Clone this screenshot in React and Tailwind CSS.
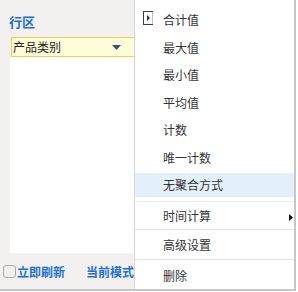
import React from 'react';

const FONT = { fontFamily: '"Noto Sans CJK SC", "Noto Sans", sans-serif' };

const topItems = ['合计值', '最大值', '最小值', '平均值', '计数', '唯一计数', '无聚合方式'];

function CheckedIcon() {
  return (
    <svg width="10" height="14" viewBox="0 0 10 14" className="absolute left-[8px] top-[3px]">
      <rect x="0.5" y="0.5" width="9" height="13" fill="#fff" stroke="#2b3a6b" />
      <line x1="9.5" y1="1" x2="9.5" y2="13" stroke="#b8bccb" />
      <path d="M4 4 L7 7 L4 10 Z" fill="#1f2d5c" />
    </svg>
  );
}

function App() {
  return (
    <div className="w-[298px] h-[292px] bg-white overflow-hidden" style={FONT}>
      <div className="flex h-[291px] w-[296px] border-b-2 border-[#c6c6c6]">
        {/* left panel */}
        <div className="w-[134px] bg-[#f2f1f0] flex flex-col shrink-0 overflow-hidden">
          <div className="pt-[12px] pl-[9px] text-[13px] leading-[19px] font-bold text-[#1f6fd6]">行区</div>
          <div className="mt-[6px] ml-[11px] h-[20px] flex items-center bg-[#fffcd9] border border-r-0 border-[#f2cd55] pl-px">
            <span className="text-[12px] text-[#222] flex-1">产品类别</span>
            <svg width="9" height="5" viewBox="0 0 9 5" className="mr-[13px]">
              <path d="M0 0 H9 L4.5 5 Z" fill="#2f5585" />
            </svg>
          </div>
          <div className="ml-[10px] h-[196px] bg-white" />
          <div className="flex items-center h-[35px] pl-[3px] pt-[2px] whitespace-nowrap">
            <span className="w-[13px] h-[13px] rounded-[3px] border border-[#a9a9a9] bg-[#f0f0f0] shrink-0" />
            <span className="ml-px text-[12px] font-bold text-[#1f6fd6] shrink-0">立即刷新</span>
            <span className="ml-[21px] text-[12px] font-bold text-[#1f6fd6] shrink-0">当前模式:</span>
          </div>
        </div>
        {/* menu */}
        <div className="flex-1 bg-white border-l border-[#d6d6d6] border-r-2 border-r-[#c6c6c6] flex flex-col pt-[8px] text-[12px] text-[#333]">
          {topItems.map((t, i) => (
            <div
              key={t}
              className={`relative h-[24px] mb-[4px] flex items-center pl-[28px] ${i === topItems.length - 1 ? 'bg-[#e3effb] mb-0' : ''}`}
            >
              {i === 0 && <CheckedIcon />}
              <span className="pt-[1px]">{t}</span>
            </div>
          ))}
          <div className="relative h-[30px] flex items-center pl-[28px] border-t border-[#ececec] border-b border-b-[#e3e3e3]">
            <span className="pt-[2px]">时间计算</span>
            <svg width="4" height="7" viewBox="0 0 4 7" className="absolute right-[1px] top-[12px]">
              <path d="M0 0 L4 3.5 L0 7 Z" fill="#111" />
            </svg>
          </div>
          <div className="h-[30px] flex items-center pl-[28px] border-b border-[#e3e3e3]">
            <span className="pt-[2px]">高级设置</span>
          </div>
          <div className="h-[30px] flex items-center pl-[28px]">
            <span className="pt-[3px]">删除</span>
          </div>
        </div>
      </div>
    </div>
  );
}

export default App;
